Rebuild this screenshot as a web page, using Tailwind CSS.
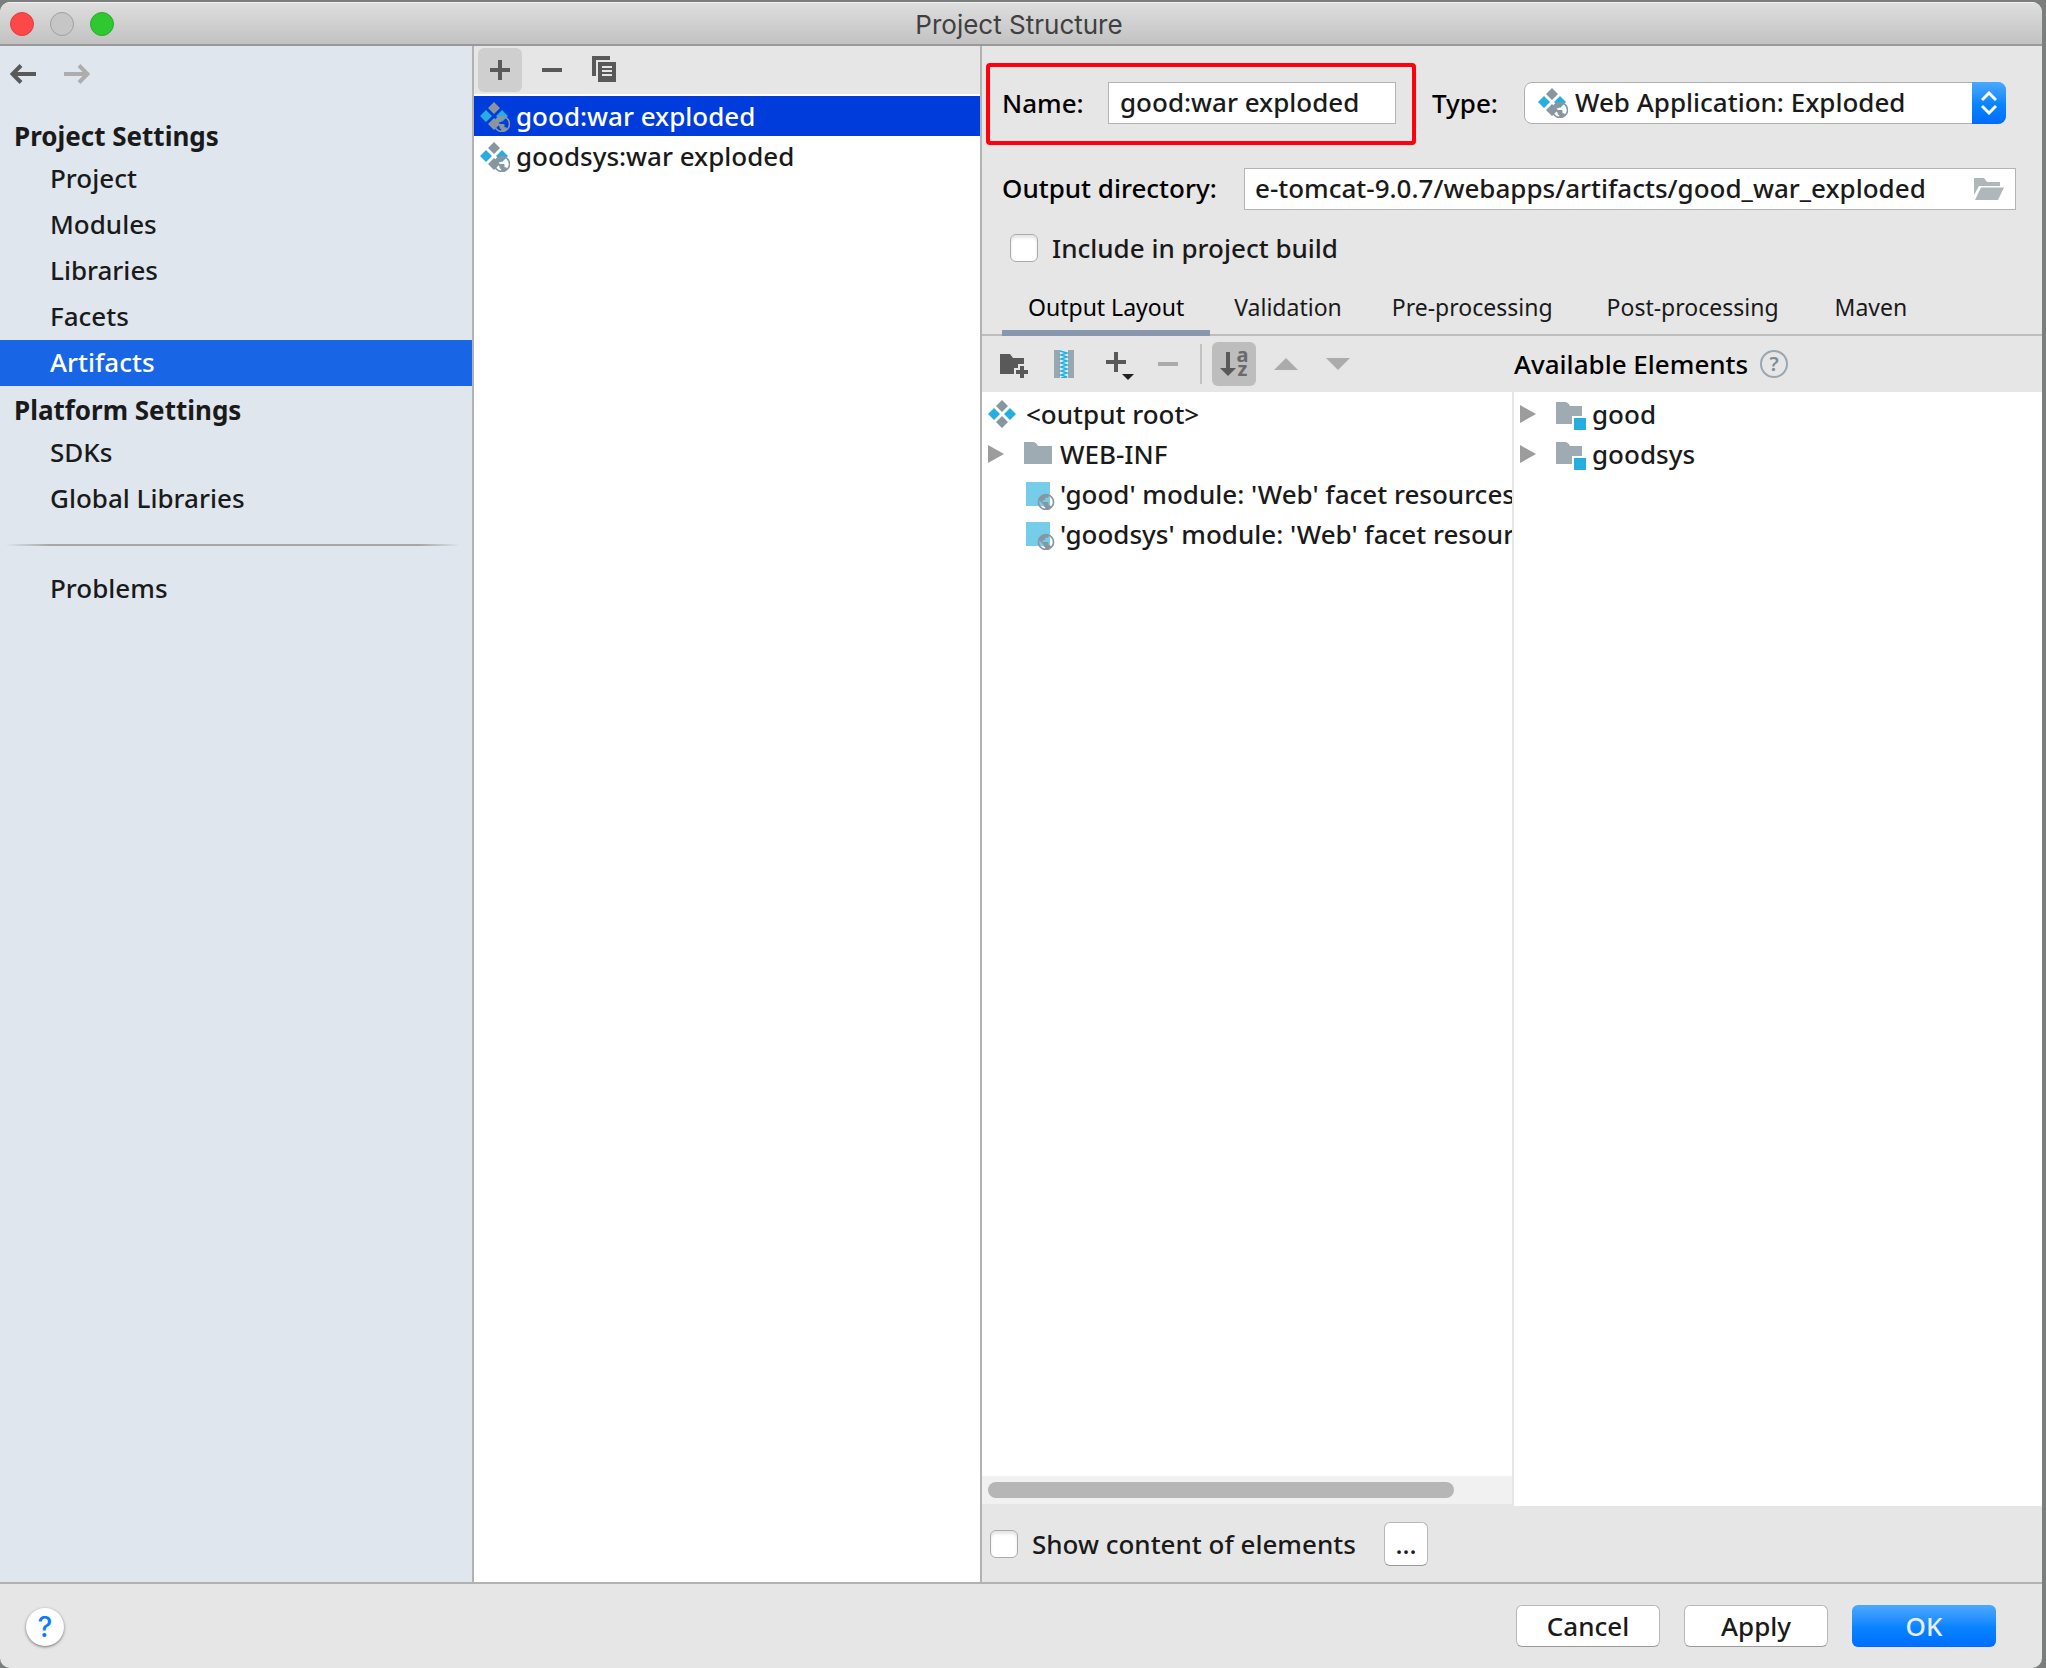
<!DOCTYPE html>
<html lang="en">
<head>
<meta charset="utf-8">
<title>Project Structure</title>
<script src="https://cdn.jsdelivr.net/npm/@tailwindcss/browser@4"></script>
</head>
<body class="bg-[#7b7e7c] font-['Noto_Sans',sans-serif] text-[26px] font-medium leading-10 text-[#1a1a1a]">
<svg class="hidden" aria-hidden="true">
  <defs>
    <mask id="badge-cut"><rect width="32" height="32" fill="#fff"/><circle cx="24" cy="24" r="10" fill="#000"/></mask>
    <mask id="facet-cut"><rect width="32" height="32" fill="#fff"/><circle cx="22" cy="24" r="10" fill="#000"/></mask>
    <symbol id="globe" viewBox="0 0 24 24"><path d="M12 2C6.48 2 2 6.48 2 12s4.48 10 10 10 10-4.48 10-10S17.52 2 12 2zm-1 17.93c-3.95-.49-7-3.85-7-7.93 0-.62.08-1.21.21-1.79L9 15v1c0 1.1.9 2 2 2v1.93zm6.9-2.54c-.26-.81-1-1.39-1.9-1.39h-1v-3c0-.55-.45-1-1-1H8v-2h2c.55 0 1-.45 1-1V7h2c1.1 0 2-.9 2-2v-.41c2.93 1.19 5 4.06 5 7.41 0 2.08-.8 3.97-2.1 5.39z" fill="#8796a1"/></symbol>
    <symbol id="artifact" viewBox="0 0 32 32"><path d="M16 2l6 6-6 6-6-6zM16 18l6 6-6 6-6-6z" fill="#8796a1"/><path d="M8 10l6 6-6 6-6-6zM24 10l6 6-6 6-6-6z" fill="#27aee0"/></symbol>
    <symbol id="web-artifact" viewBox="0 0 32 32"><g mask="url(#badge-cut)"><use href="#artifact" width="32" height="32"/></g><use href="#globe" x="14" y="14" width="20" height="20"/></symbol>
    <symbol id="web-facet" viewBox="0 0 32 32"><path d="M2 4h24v24H2z" fill="#76cde9" mask="url(#facet-cut)"/><use href="#globe" x="12" y="14" width="20" height="20"/></symbol>
    <symbol id="folder" viewBox="0 0 32 32"><path d="M2 4h9q3 0 5 4h14v18H2z" fill="#9eabb3"/></symbol>
    <symbol id="module" viewBox="0 0 32 32"><path d="M2 4h9q3 0 5 4h12v10H18v8H2z" fill="#9eabb3"/><path d="M20 20h12v12H20z" fill="#27aee0"/></symbol>
    <symbol id="closed" viewBox="0 0 16 18"><path d="M0 0l16 9-16 9z" fill="#9c9c9c"/></symbol>
  </defs>
</svg>

<div class="min-h-screen pt-[2px] pr-1 flex flex-col">
 <div class="grow flex flex-col bg-[#e6e6e6] rounded-[10px] overflow-hidden">
  <header class="h-11 shrink-0 grid grid-cols-[1fr_auto_1fr] items-center border-b-2 border-[#999] border-t border-t-[#f2f2f2] bg-linear-to-b from-[#dedede] to-[#c2c2c2]">
    <div class="flex gap-4 pl-[10px]">
      <button aria-label="Close" class="size-6 rounded-full bg-[#fc4848] border border-[#e03c3c]"></button>
      <button aria-label="Minimize" class="size-6 rounded-full bg-[#c6c6c6] border border-[#a0a0a0]"></button>
      <button aria-label="Zoom" class="size-6 rounded-full bg-[#2fc831] border border-[#25ac29]"></button>
    </div>
    <h1 class="pt-[2px] pr-1 font-['Inter',sans-serif] text-[26px] font-normal text-[#404040]">Project Structure</h1>
  </header>

  <main class="grow flex min-h-0">
    <nav class="w-[474px] shrink-0 bg-[#dfe6ee] border-r-2 border-[#b2b2b2]">
      <div class="h-[66px] flex items-start gap-7 pt-[18px] pl-[10px]">
        <button aria-label="Back"><svg class="w-[26px] h-5" viewBox="0 0 26 20" fill="none" stroke="#595959" stroke-width="4"><path d="M26 10H3M11 1.5L2.500 10l8.500 8.500"/></svg></button>
        <button aria-label="Forward" disabled><svg class="w-[26px] h-5" viewBox="0 0 26 20" fill="none" stroke="#adadad" stroke-width="4"><path d="M0 10h23M15 1.500L23.500 10l-8.500 8.500"/></svg></button>
      </div>
      <h2 class="h-11 pt-1 pl-[14px] font-bold">Project Settings</h2>
      <ul class="leading-[44px]">
        <li><a href="#" class="block pl-[50px] pb-[2px]">Project</a></li>
        <li><a href="#" class="block pl-[50px] pb-[2px]">Modules</a></li>
        <li><a href="#" class="block pl-[50px] pb-[2px]">Libraries</a></li>
        <li><a href="#" class="block pl-[50px] pb-[2px]">Facets</a></li>
        <li><a href="#" aria-current="page" class="block pl-[50px] pb-[2px] bg-[#1866e5] text-white">Artifacts</a></li>
      </ul>
      <h2 class="h-11 pt-1 pl-[14px] font-bold">Platform Settings</h2>
      <ul class="leading-[44px]">
        <li><a href="#" class="block pl-[50px] pb-[2px]">SDKs</a></li>
        <li><a href="#" class="block pl-[50px] pb-[2px]">Global Libraries</a></li>
      </ul>
      <div class="h-[2px] mt-[22px] mb-5 ml-[5px] mr-3 bg-linear-to-r from-transparent from-0% via-[#a6a6a6] via-10% to-transparent">
        <div class="h-full ml-[45px] bg-linear-to-r from-[#a6a6a6] from-90% to-[#dfe6ee]"></div>
      </div>
      <a href="#" class="block pl-[50px] pb-[2px] leading-[44px]">Problems</a>
    </nav>

    <section aria-label="Artifacts" class="w-[508px] shrink-0 bg-white border-r-2 border-[#b2b2b2] flex flex-col">
      <div class="h-12 mb-[2px] pl-1 flex items-center gap-2 bg-[#e6e6e6]">
        <button aria-label="Add" class="size-11 rounded-md bg-[#cfcfcf] grid place-items-center"><svg class="size-5" viewBox="0 0 20 20"><path d="M8 0h4v8h8v4h-8v8H8v-8H0V8h8z" fill="#595959"/></svg></button>
        <button aria-label="Remove" class="size-11 grid place-items-center"><svg class="size-5" viewBox="0 0 20 20"><path d="M0 8h20v4H0z" fill="#595959"/></svg></button>
        <button aria-label="Copy" class="size-11 pb-[2px] grid place-items-center"><svg class="w-6 h-[26px]" viewBox="0 0 24 26"><path d="M0 0h18v4H4v16H0zM6 6h18v20H6zM10 10v2h10v-2zM10 14v2h10v-2zM10 18v2h10v-2z" fill="#595959" fill-rule="evenodd"/></svg></button>
      </div>
      <ul>
        <li class="h-10 pl-1 flex items-center gap-[6px] bg-[#003cdb] text-white"><svg class="size-8"><use href="#web-artifact"/></svg>good:war exploded</li>
        <li class="h-10 pl-1 flex items-center gap-[6px]"><svg class="size-8"><use href="#web-artifact"/></svg>goodsys:war exploded</li>
      </ul>
    </section>

    <section class="grow min-w-0 flex flex-col">
      <div class="mt-[17px] ml-1 mr-9 flex items-center gap-4">
        <div class="w-[430px] h-[82px] shrink-0 pl-3 pr-4 pb-[2px] flex items-center justify-between border-4 border-[#ff000c] rounded-sm">
          <label for="name" class="text-black">Name:</label>
          <input id="name" type="text" value="good:war exploded" class="w-72 h-[42px] px-[11px] pb-[2px] bg-white border border-[#b4b4b4]">
        </div>
        <label for="type" class="w-[76px] mb-[2px] shrink-0 text-black">Type:</label>
        <div class="relative grow h-[42px] mb-[2px]">
          <select id="type" class="appearance-none block size-full pl-[50px] pr-12 pb-[2px] leading-9 bg-white border border-[#b0b0b0] rounded-lg"><option>Web Application: Exploded</option></select>
          <svg class="absolute left-3 top-1 size-8 pointer-events-none"><use href="#web-artifact"/></svg>
          <span class="absolute right-0 inset-y-0 w-[34px] rounded-r-lg bg-linear-to-b from-[#4aa8fe] via-[#0b86ff] to-[#006cff] grid place-items-center pointer-events-none"><svg class="w-4 h-6" viewBox="0 0 16 24" fill="none" stroke="#fff" stroke-width="3"><path d="M1 9l7-7 7 7M1 15l7 7 7-7"/></svg></span>
        </div>
      </div>
      <div class="mt-[23px] ml-5 mr-[26px] flex items-center">
        <label for="dir" class="w-[242px] pb-[2px] shrink-0 text-black">Output directory:</label>
        <div class="grow min-w-0 h-[42px] flex items-center pl-[10px] pr-[11px] bg-white border border-[#b4b4b4]">
          <input id="dir" type="text" value="e-tomcat-9.0.7/webapps/artifacts/good_war_exploded" class="grow min-w-0 h-10 pb-[2px]">
          <button aria-label="Browse" class="shrink-0"><svg class="w-[30px] h-[22px]" viewBox="0 0 30 22" fill="#afb7bb"><path d="M0 0h10l3 4h13v4H5L0 17z"/><path d="M7 9.500h23L24 22H1z"/></svg></button>
        </div>
      </div>
      <div class="mt-[18px] ml-7 flex items-center gap-[14px]">
        <input id="include" type="checkbox" class="appearance-none size-7 rounded-md bg-white border border-[#a9a9a9] shadow-[inset_0_3px_3px_#0000001a]">
        <label for="include">Include in project build</label>
      </div>
      <div role="tablist" class="mt-[18px] pl-5 flex items-end border-b-2 border-[#bdbdbd] text-[23px] font-normal">
        <button role="tab" aria-selected="true" class="h-[50px] px-[26px] -mb-[2px] pb-[2px] border-b-6 border-[#8897ae] text-black">Output Layout</button>
        <button role="tab" class="h-12 px-6 pb-[6px]">Validation</button>
        <button role="tab" class="h-12 px-[26px] pb-[6px]">Pre-processing</button>
        <button role="tab" class="h-12 px-7 pb-[6px]">Post-processing</button>
        <button role="tab" class="h-12 px-7 pb-[6px]">Maven</button>
      </div>
      <div class="h-14 shrink-0 flex">
        <div class="w-[532px] shrink-0 pl-[10px] flex items-center gap-2">
          <button aria-label="New folder" class="w-11 h-11 pt-1 grid place-items-center"><svg class="w-7 h-6" viewBox="0 0 28 24" fill="#595959"><path d="M0 0h10l3 4h11v6h-6v4h-4v6H0z"/><path d="M20 12h4v4h4v4h-4v4h-4v-4h-4v-4h4z"/></svg></button>
          <button aria-label="New archive" class="w-10 h-11 grid place-items-center"><svg class="w-5 h-7" viewBox="0 0 20 28"><path d="M0 0h6v28H0zM14 0h6v28h-6z" fill="#9aa7b0"/><path d="M6 0h8v28H6z" fill="#d9edf4"/><path d="M6 1l7 2-6 2 6 2-6 2 6 2-6 2 6 2-6 2 6 2-6 2 6 2-6 2 6 2-6 1" fill="none" stroke="#27aee0" stroke-width="1.500"/></svg></button>
          <button aria-label="Add element" class="w-11 h-11 pl-3 pt-1 grid place-items-center"><svg class="w-7 h-7" viewBox="0 0 28 28"><path d="M8 0h4v8h8v4h-8v8H8v-8H0V8h8z" fill="#595959"/><path d="M16 22h12l-6 6z" fill="#222"/></svg></button>
          <button aria-label="Remove element" disabled class="w-12 h-11 grid place-items-center"><svg class="size-5" viewBox="0 0 20 20"><path d="M0 8h20v4H0z" fill="#ababab"/></svg></button>
          <span class="w-[2px] h-10 mr-[2px] bg-[#c2c2c2]"></span>
          <button aria-label="Sort elements" class="w-11 h-11 rounded-md bg-[#bdbdbd] flex items-center justify-center gap-px"><svg class="w-4 h-6" viewBox="0 0 16 24"><path d="M6 0h4v16h6l-8 8-8-8h6z" fill="#595959"/></svg><span class="flex flex-col text-[20px] font-bold leading-[14px] text-[#6a6a6a] pb-1"><span>a</span><span>z</span></span></button>
          <button aria-label="Move up" disabled class="w-11 h-11 grid place-items-center"><svg class="w-6 h-3" viewBox="0 0 24 12"><path d="M12 0l12 12H0z" fill="#ababab"/></svg></button>
          <button aria-label="Move down" disabled class="w-11 h-11 grid place-items-center"><svg class="w-6 h-3" viewBox="0 0 24 12"><path d="M0 0h24L12 12z" fill="#ababab"/></svg></button>
        </div>
        <div class="flex items-center gap-3 text-black">Available Elements
          <button aria-label="Help on elements" class="size-7 rounded-full border-2 border-[#9aa7b0] text-[20px] leading-6 font-semibold text-[#7f8b91]">?</button>
        </div>
      </div>
      <div class="grow flex min-h-0">
        <div class="w-[532px] mb-[2px] shrink-0 bg-white border-r-2 border-[#e6e6e6] flex flex-col">
          <ul class="grow pt-[2px] overflow-hidden whitespace-nowrap">
            <li class="h-10 pl-1 flex items-center gap-2"><svg class="size-8 shrink-0"><use href="#artifact"/></svg>&lt;output root&gt;</li>
            <li class="h-10 pl-[6px] flex items-center"><svg class="w-4 h-[18px] shrink-0"><use href="#closed"/></svg><svg class="size-8 ml-[18px] mr-[6px] shrink-0"><use href="#folder"/></svg>WEB-INF</li>
            <li class="h-10 pl-[42px] flex items-center gap-1"><svg class="size-8 shrink-0"><use href="#web-facet"/></svg>'good' module: 'Web' facet resources</li>
            <li class="h-10 pl-[42px] flex items-center gap-1"><svg class="size-8 shrink-0"><use href="#web-facet"/></svg>'goodsys' module: 'Web' facet resources</li>
          </ul>
          <div class="h-7 px-[6px] flex items-center bg-[#f1f1f1]"><div class="w-[90%] h-4 rounded-full bg-[#b6b6b6]"></div></div>
        </div>
        <ul class="grow pt-[2px] bg-white">
          <li class="h-10 pl-[6px] flex items-center"><svg class="w-4 h-[18px]"><use href="#closed"/></svg><svg class="size-8 ml-[18px] mr-[6px]"><use href="#module"/></svg>good</li>
          <li class="h-10 pl-[6px] flex items-center"><svg class="w-4 h-[18px]"><use href="#closed"/></svg><svg class="size-8 ml-[18px] mr-[6px]"><use href="#module"/></svg>goodsys</li>
        </ul>
      </div>
      <div class="h-[76px] shrink-0 pl-2 flex items-center">
        <input id="show" type="checkbox" class="appearance-none size-7 rounded-md bg-white border border-[#a9a9a9] shadow-[inset_0_3px_3px_#0000001a]">
        <label for="show" class="w-[366px] pl-[14px]">Show content of elements</label>
        <button aria-label="Content options" class="size-11 rounded-md bg-white border border-[#b8b8b8] border-b-[#9a9a9a]">...</button>
      </div>
    </section>
  </main>

  <footer class="h-[86px] shrink-0 pl-[26px] pr-[46px] flex items-center border-t-2 border-[#b2b2b2]">
    <button aria-label="Help" class="size-[38px] mt-[2px] rounded-full bg-white shadow-[0_1px_3px_#00000080] font-['Inter',sans-serif] text-[28px] leading-[38px] text-[#0a7aff]">?</button>
    <div class="ml-auto flex gap-6">
      <button class="w-36 h-[42px] rounded-md bg-white border border-[#b8b8b8] border-b-[#9a9a9a]">Cancel</button>
      <button class="w-36 h-[42px] rounded-md bg-white border border-[#b8b8b8] border-b-[#9a9a9a]">Apply</button>
      <button class="w-36 h-[42px] rounded-md bg-linear-to-b from-[#4aa8fe] via-[#0b86ff] to-[#006cff] text-[#e9eef8]">OK</button>
    </div>
  </footer>
 </div>
</div>
</body>
</html>
